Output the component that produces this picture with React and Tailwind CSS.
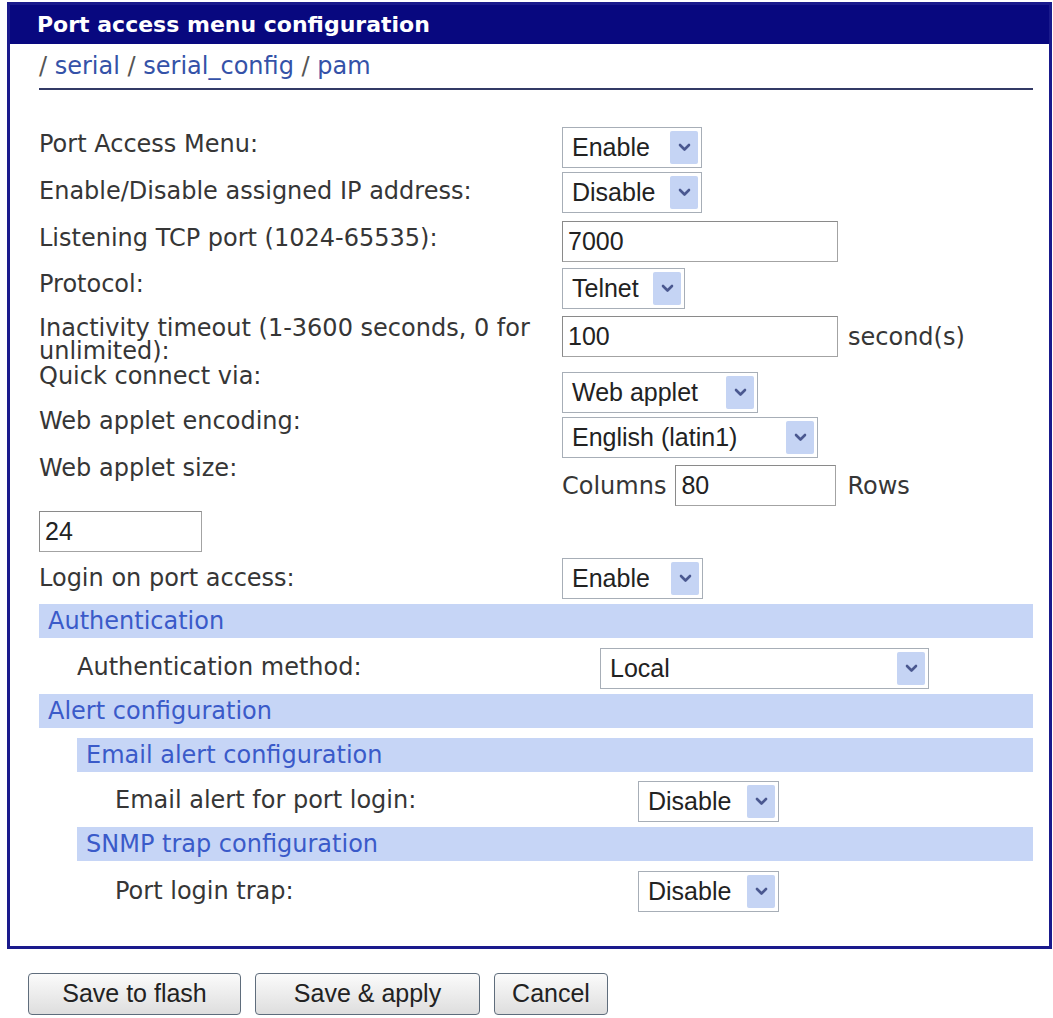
import React from "react";

const VERDANA = "font-['DejaVu_Sans',Verdana,sans-serif]";
const ARIAL = "font-['Liberation_Sans',Arial,sans-serif]";

function Chevron() {
  return (
    <svg width="13" height="9" viewBox="0 0 13 9" fill="none">
      <path
        d="M2 2 L6.5 6.5 L11 2"
        stroke="#4a5890"
        strokeWidth="2.6"
        strokeLinecap="round"
        strokeLinejoin="round"
      />
    </svg>
  );
}

function Select({ value, className = "" }) {
  return (
    <div
      className={`flex h-[41px] items-center border border-[#a7aeb7] bg-white pl-[9px] pr-[3px] ${className}`}
    >
      <span className={`flex-1 whitespace-nowrap text-[25px] leading-none text-[#222] ${ARIAL}`}>
        {value}
      </span>
      <span className="flex h-[33px] w-[28px] items-center justify-center rounded-[2px] bg-[#c5d4f4]">
        <Chevron />
      </span>
    </div>
  );
}

function TextInput({ value, className = "" }) {
  return (
    <div
      className={`flex h-[41px] items-center border border-[#a3a3a3] border-t-[#8a8a8a] border-l-[#8a8a8a] bg-white pl-[5px] text-[25px] leading-none text-[#222] ${ARIAL} ${className}`}
    >
      {value}
    </div>
  );
}

function Row({ label, h, labelClass, children }) {
  return (
    <div className={`flex items-start ${h}`}>
      <div className={`w-[523px] shrink-0 ${labelClass}`}>{label}</div>
      <div className="flex items-center">{children}</div>
    </div>
  );
}

function Band({ title }) {
  return (
    <div className="flex h-[34px] items-center bg-[#c6d5f6] pl-[9px] text-[24px] leading-none text-[#3a5ac9]">
      {title}
    </div>
  );
}

function Button({ label, className = "" }) {
  return (
    <button
      className={`h-[42px] rounded-[4px] border border-[#5f6d7c] bg-gradient-to-b from-[#fbfbfb] to-[#dedede] text-[25px] text-[#222] ${ARIAL} ${className}`}
    >
      {label}
    </button>
  );
}

export default function App() {
  return (
    <div className={`min-h-screen bg-white pt-[2px] ${VERDANA}`}>
      <div className="ml-[7px] w-[1045px] border-[3px] border-[#1a1a8c]">
        {/* Title bar */}
        <div className="flex h-[39px] items-center bg-[#08087f] pl-[27px] text-[22px] font-bold text-white">
          Port access menu configuration
        </div>

        <div className="pl-[29px] pr-[16px] pb-[34px] text-[24px] leading-[24px] text-[#363636]">
          {/* Breadcrumb */}
          <div className="border-b-2 border-[#333a66] pt-[10px] pb-[10px] text-[#3452a8]">
            <span className="text-[#555]">/ </span>serial
            <span className="text-[#555]"> / </span>serial_config
            <span className="text-[#555]"> / </span>pam
          </div>

          <div className="mt-[37px]">
            <Row label="Port Access Menu:" h="h-[45px]" labelClass="pt-[5px]">
              <Select value="Enable" className="w-[140px]" />
            </Row>
            <Row label="Enable/Disable assigned IP address:" h="h-[49px]" labelClass="pt-[7px]">
              <Select value="Disable" className="w-[140px]" />
            </Row>
            <Row label="Listening TCP port (1024-65535):" h="h-[47px]" labelClass="pt-[5px]">
              <TextInput value="7000" className="w-[276px]" />
            </Row>
            <Row label="Protocol:" h="h-[48px]" labelClass="pt-[4px]">
              <Select value="Telnet" className="w-[123px]" />
            </Row>
            <Row
              label={
                <>
                  Inactivity timeout (1-3600 seconds, 0 for
                  <br />
                  unlimited):
                </>
              }
              h="h-[56px]"
              labelClass="pt-[1px] leading-[23px]"
            >
              <TextInput value="100" className="w-[276px]" />
              <span className="ml-[10px]">second(s)</span>
            </Row>
            <Row label="Quick connect via:" h="h-[45px]" labelClass="-mt-[8px]">
              <Select value="Web applet" className="w-[196px]" />
            </Row>
            <Row label="Web applet encoding:" h="h-[48px]" labelClass="-mt-[8px]">
              <Select value="English (latin1)" className="w-[256px]" />
            </Row>
            <Row label="Web applet size:" h="h-[46px]" labelClass="-mt-[9px]">
              <span>Columns</span>
              <TextInput value="80" className="ml-[9px] w-[161px]" />
              <span className="ml-[11px]">Rows</span>
            </Row>
            <div className="h-[47px]">
              <TextInput value="24" className="w-[163px]" />
            </div>
            <Row label="Login on port access:" h="h-[46px]" labelClass="pt-[8px]">
              <Select value="Enable" className="w-[141px]" />
            </Row>
          </div>

          {/* Authentication */}
          <Band title="Authentication" />
          <div className="ml-[38px] mt-[10px] flex h-[46px] items-start">
            <div className="w-[523px] shrink-0 pt-[7px]">Authentication method:</div>
            <Select value="Local" className="w-[329px]" />
          </div>

          {/* Alerts */}
          <Band title="Alert configuration" />
          <div className="ml-[38px] mt-[10px]">
            <Band title="Email alert configuration" />
            <div className="ml-[38px] mt-[9px] flex h-[46px] items-start">
              <div className="w-[523px] shrink-0 pt-[7px]">Email alert for port login:</div>
              <Select value="Disable" className="w-[141px]" />
            </div>
            <Band title="SNMP trap configuration" />
            <div className="ml-[38px] mt-[10px] flex h-[41px] items-start">
              <div className="w-[523px] shrink-0 pt-[8px]">Port login trap:</div>
              <Select value="Disable" className="w-[141px]" />
            </div>
          </div>
        </div>
      </div>

      <div className="ml-[28px] mt-[24px] flex gap-[14px]">
        <Button label="Save to flash" className="w-[213px]" />
        <Button label="Save & apply" className="w-[225px]" />
        <Button label="Cancel" className="w-[114px]" />
      </div>
    </div>
  );
}
